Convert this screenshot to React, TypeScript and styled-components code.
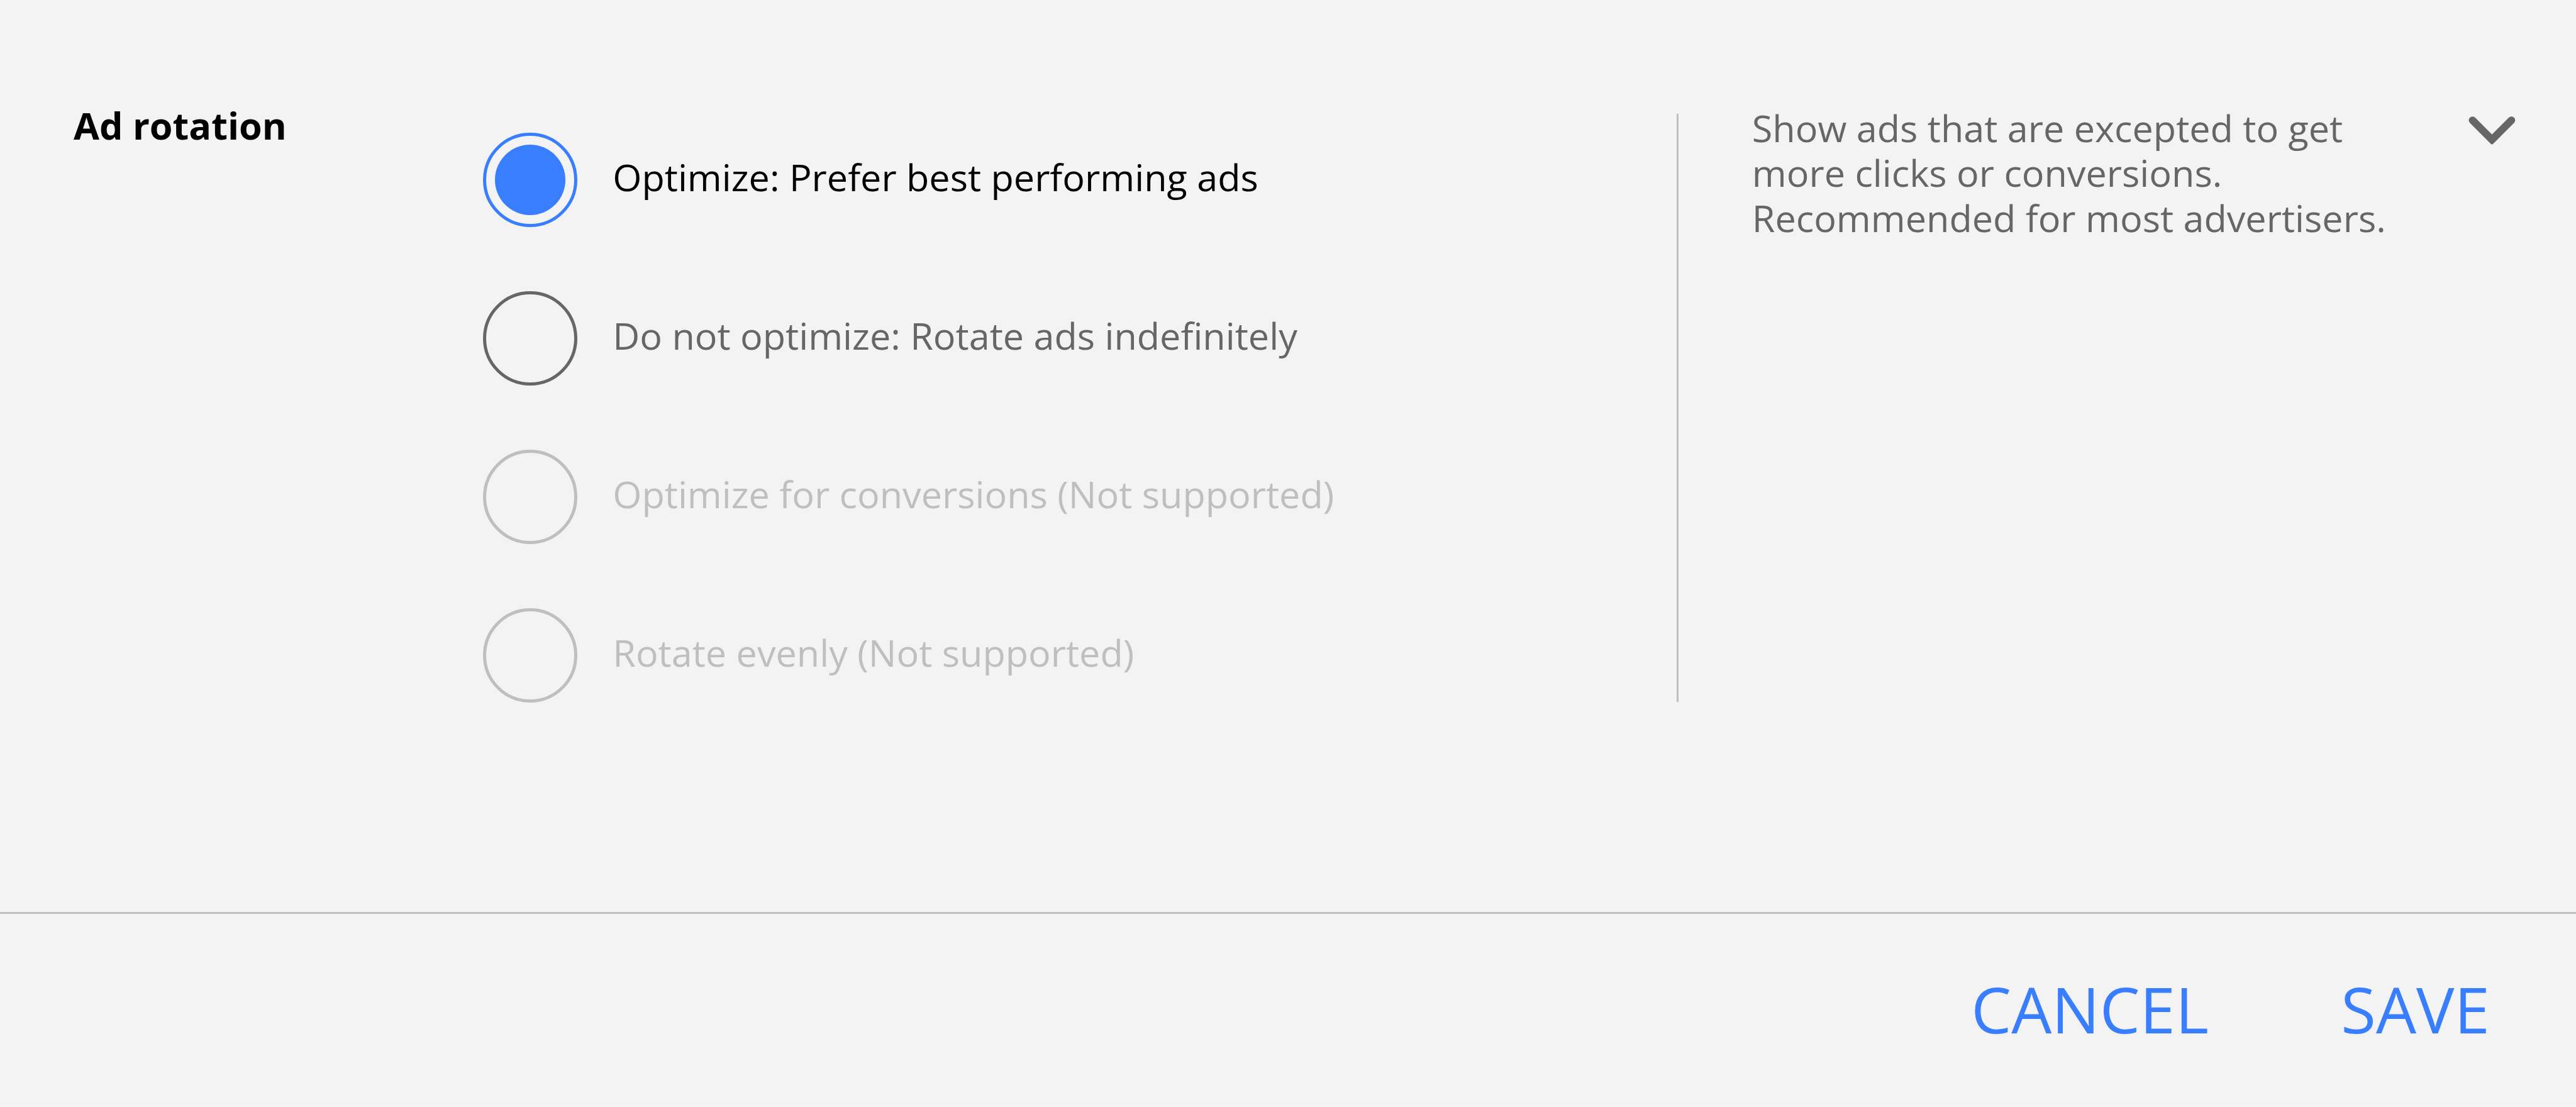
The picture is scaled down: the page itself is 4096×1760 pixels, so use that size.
import React from 'react';
import styled, { createGlobalStyle } from 'styled-components';

const Global = createGlobalStyle`
  * { box-sizing: border-box; }
  body { margin: 0; background: #f3f3f3; font-family: "Open Sans", sans-serif; }
`;
const Page = styled.div`
  width: 4096px; height: 1760px; display: flex; flex-direction: column; background: #f3f3f3; overflow: hidden;
`;
const Main = styled.main`
  height: 1450px; display: flex; align-items: flex-start; padding-left: 117px;
`;
const Title = styled.h2`
  margin: 158px 0 0; width: 651px; font-size: 59.33px; font-weight: 700; line-height: 82px; color: #000; white-space: nowrap;
`;
const Options = styled.div`
  margin-top: 211px; width: 1898px; display: flex; flex-direction: column; gap: 102px;
`;
const Option = styled.label<{ $color: string }>`
  height: 150px; display: flex; align-items: center; gap: 56.3px; font-size: 59.33px; line-height: 82px; color: ${p => p.$color}; white-space: nowrap;
`;
const Radio = styled.span<{ $color: string }>`
  width: 150px; height: 150px; border-radius: 50%; border: 5px solid ${p => p.$color}; display: flex; align-items: center; justify-content: center;
`;
const Dot = styled.span`
  width: 112px; height: 112px; border-radius: 50%; background: #387eff;
`;
const Label = styled.span` padding-bottom: 10px; `;
const Help = styled.aside`
  margin-top: 181px; height: 935px; border-left: 3px solid #bfbfbf; padding-left: 116.8px; display: flex; align-items: flex-start;
`;
const HelpText = styled.p`
  margin: -12.8px 0 0; width: 1139.2px; font-size: 59.33px; line-height: 71.2px; color: #666; white-space: nowrap;
`;
const Chevron = styled.svg` margin-top: 4px; width: 76px; height: 47px; `;
const Footer = styled.footer`
  flex: 1; border-top: 3px solid #bfbfbf; border-bottom: 3px solid #f6f6f6; display: flex; justify-content: flex-end; align-items: flex-start; gap: 210.5px; padding: 82px 137.2px 0 0;
`;
const Action = styled.button`
  border: 0; padding: 0; background: none; font-family: inherit; font-size: 101.4px; line-height: 138px; color: #387eff;
`;

const options = [
  { text: 'Optimize: Prefer best performing ads', ring: '#387eff', color: '#000', on: true },
  { text: 'Do not optimize: Rotate ads indefinitely', ring: '#666', color: '#666' },
  { text: 'Optimize for conversions (Not supported)', ring: '#bfbfbf', color: '#bfbfbf' },
  { text: 'Rotate evenly (Not supported)', ring: '#bfbfbf', color: '#bfbfbf' },
];

export default function App() {
  return (
    <Page>
      <Global />
      <Main>
        <Title>Ad rotation</Title>
        <Options>
          {options.map(o => (
            <Option key={o.text} $color={o.color}>
              <Radio $color={o.ring}>{o.on && <Dot />}</Radio>
              <Label>{o.text}</Label>
            </Option>
          ))}
        </Options>
        <Help>
          <HelpText>
            Show ads that are excepted to get<br />more clicks or conversions.<br />Recommended for most advertisers.
          </HelpText>
          <Chevron viewBox="0 0 76 47" fill="#666">
            <path
              transform="translate(0.4 0.1)"
              d="M10.07 1.73 L37 28.66 L63.93 1.73 A5.9 5.9 0 0 1 72.27 10.07 L39.05 43.29 A2.9 2.9 0 0 1 34.95 43.29 L1.73 10.07 A5.9 5.9 0 0 1 10.07 1.73 Z"
            />
          </Chevron>
        </Help>
      </Main>
      <Footer>
        <Action>CANCEL</Action>
        <Action>SAVE</Action>
      </Footer>
    </Page>
  );
}
